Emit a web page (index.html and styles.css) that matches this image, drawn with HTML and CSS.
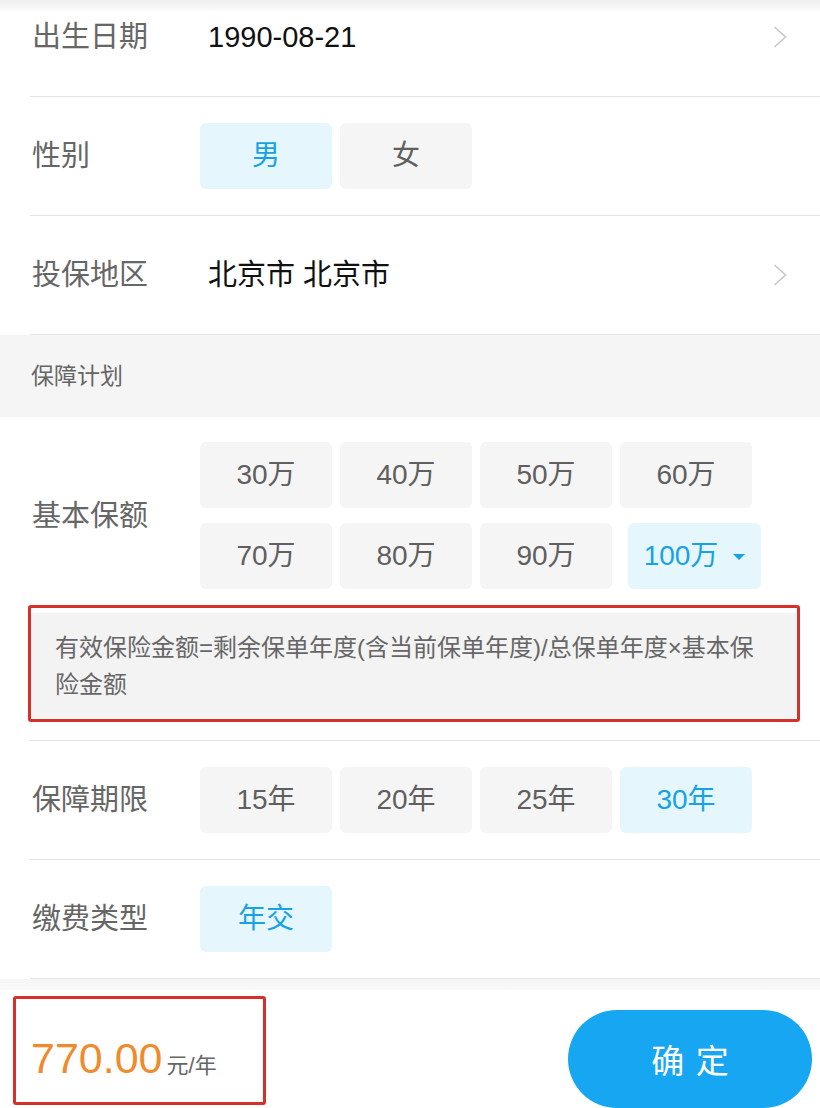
FILE: index.html
```html
<!DOCTYPE html>
<html lang="zh-CN">
<head>
<meta charset="utf-8">
<title>保障计划</title>
<link rel="stylesheet" href="styles.css">
</head>
<body>
<div class="page">
  <div class="row row-first">
    <div class="label">出生日期</div>
    <div class="value">1990-08-21</div>
    <svg class="chev" width="14" height="22" viewBox="0 0 14 22"><polyline points="1.5,1 12.5,11 1.5,21" fill="none" stroke="#c9c9c9" stroke-width="1.6"/></svg>
  </div>
  <div class="row">
    <div class="label">性别</div>
    <div class="opts">
      <div class="opt is-on">男</div>
      <div class="opt">女</div>
    </div>
  </div>
  <div class="row">
    <div class="label">投保地区</div>
    <div class="value">北京市 北京市</div>
    <svg class="chev" width="14" height="22" viewBox="0 0 14 22"><polyline points="1.5,1 12.5,11 1.5,21" fill="none" stroke="#c9c9c9" stroke-width="1.6"/></svg>
  </div>
  <div class="section">保障计划</div>
  <div class="row row-block">
    <div class="row-main">
      <div class="label">基本保额</div>
      <div class="grid">
        <div class="opt">30万</div>
        <div class="opt">40万</div>
        <div class="opt">50万</div>
        <div class="opt">60万</div>
        <div class="opt">70万</div>
        <div class="opt">80万</div>
        <div class="opt">90万</div>
        <div class="opt is-on opt-drop">100万<span class="caret"></span></div>
      </div>
    </div>
    <div class="mark mark-note">
      <div class="note">有效保险金额=剩余保单年度(含当前保单年度)/总保单年度×基本保险金额</div>
    </div>
  </div>
  <div class="row">
    <div class="label">保障期限</div>
    <div class="opts">
      <div class="opt">15年</div>
      <div class="opt">20年</div>
      <div class="opt">25年</div>
      <div class="opt is-on">30年</div>
    </div>
  </div>
  <div class="row">
    <div class="label">缴费类型</div>
    <div class="opts">
      <div class="opt is-on">年交</div>
    </div>
  </div>
</div>
<div class="bar">
  <div class="mark mark-price"><span class="price">770.00</span><span class="unit">元/年</span></div>
  <button class="confirm">确 定</button>
</div>
</body>
</html>
```
FILE: styles.css
```css
html, body {
  margin: 0;
  padding: 0;
}
body {
  width: 820px;
  height: 1108px;
  overflow: hidden;
  font-family: "Liberation Sans", "Noto Sans CJK SC", sans-serif;
  background: linear-gradient(#eeeeee, #fafafa 10px, #ffffff 12px) no-repeat;
  color: #111;
}
.page {
  margin-top: -22px;
}
.row {
  margin-left: 30px;
  height: 119px;
  box-sizing: border-box;
  border-bottom: 1px solid #e4e4e4;
  display: flex;
  align-items: center;
}
.label {
  width: 168px;
  padding-left: 2px;
  flex: none;
  font-size: 29px;
  line-height: 40px;
  color: #666;
}
.value {
  padding-left: 8px;
  font-size: 29px;
  line-height: 40px;
  color: #111;
}
.chev {
  margin-left: auto;
  margin-right: 33px;
  flex: none;
}
.opts {
  display: flex;
  gap: 8px;
}
.opt {
  width: 132px;
  height: 66px;
  box-sizing: border-box;
  border-radius: 6px;
  background: #f5f5f5;
  color: #5f5f5f;
  font-size: 28px;
  line-height: 1;
  display: flex;
  align-items: center;
  justify-content: center;
}
.opt.is-on {
  background: #e5f6fd;
  color: #17a2e6;
}
.opt-drop {
  width: 133px;
  margin-left: 8px;
}
.caret {
  width: 0;
  height: 0;
  margin-left: 15px;
  margin-top: 2px;
  border-left: 6px solid transparent;
  border-right: 6px solid transparent;
  border-top: 6px solid #17a2e6;
}
.section {
  height: 82px;
  box-sizing: border-box;
  padding: 0 0 4px 31px;
  background: #f5f5f5;
  color: #666;
  font-size: 23px;
  display: flex;
  align-items: center;
}
.row-block {
  height: auto;
  display: block;
  padding: 25px 0 18px;
}
.row-main {
  display: flex;
  align-items: center;
}
.grid {
  display: grid;
  grid-template-columns: repeat(4, 132px);
  gap: 15px 8px;
}
.mark {
  border: 3px solid #d7302b;
  border-radius: 3px;
  box-sizing: border-box;
}
.mark-note {
  width: 772px;
  margin: 16px 0 0 -2px;
  padding: 5px 1px 1px 0;
}
.note {
  height: 105px;
  box-sizing: border-box;
  padding: 16px 24px 15px 24px;
  background: #f3f3f3;
  color: #666;
  font-size: 24px;
  line-height: 37px;
}
.bar {
  height: 129px;
  box-sizing: border-box;
  padding: 17px 8px 0 13px;
  display: flex;
  justify-content: space-between;
  align-items: flex-start;
  background: linear-gradient(#f6f6f6, #f9f9f9 11px, #ffffff 11px);
}
.mark-price {
  width: 253px;
  height: 109px;
  padding: 34px 0 0 15px;
  line-height: 50px;
  white-space: nowrap;
}
.price {
  font-size: 43px;
  color: #f08b2d;
}
.unit {
  font-size: 22px;
  line-height: 1;
  color: #666;
  margin-left: 4px;
}
.confirm {
  width: 244px;
  height: 98px;
  margin-top: 14px;
  border: none;
  border-radius: 49px;
  background: #16a6f2;
  color: #fff;
  font-family: "Noto Sans CJK SC", sans-serif;
  font-size: 33px;
  word-spacing: 4px;
  padding: 0;
}
```
